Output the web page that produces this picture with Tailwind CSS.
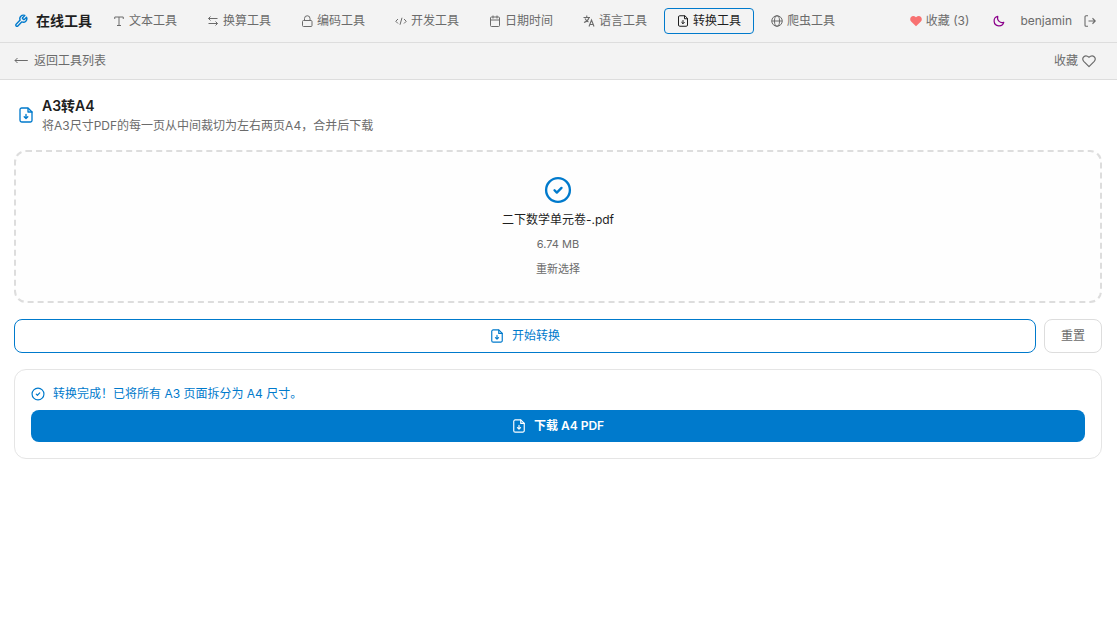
<!DOCTYPE html>
<html lang="zh-CN">
<head>
    <meta charset="UTF-8">
    <meta name="viewport" content="width=device-width, initial-scale=1.0">
    <title>A3转A4 - 在线工具</title>
    <script src="https://cdn.jsdelivr.net/npm/@tailwindcss/browser@4"></script>
</head>
<body class="min-h-screen bg-white font-['Inter','Noto_Sans_CJK_SC',sans-serif] text-xs text-[#6b6b6b]">
    <!-- Shared icons -->
    <svg class="hidden">
        <symbol id="file-down" viewBox="0 0 24 24" fill="none" stroke="currentColor" stroke-width="2" stroke-linecap="round" stroke-linejoin="round">
            <path d="M15 1.500H5.500A2.500 2.500 0 0 0 3 4v16a2.500 2.500 0 0 0 2.500 2.500h13A2.500 2.500 0 0 0 21 20V7.500z"/>
            <path d="M15 2v5.500h6M12 11v6M9.300 14.700l2.700 2.700 2.700-2.700"/>
        </symbol>
        <symbol id="check-circle" viewBox="0 0 24 24" fill="none" stroke="currentColor" stroke-width="2" stroke-linecap="round" stroke-linejoin="round">
            <circle cx="12" cy="12" r="10.2"/>
            <path d="m9 12.200 2 2 4-4"/>
        </symbol>
    </svg>

    <!-- Top navigation -->
    <header class="flex h-[43px] items-center border-b border-[#dddddd] bg-[#f3f3f3] px-3.5">
        <a class="mr-2 flex items-center gap-2 text-sm font-bold text-[#1e1e1e]">
            <svg class="size-3.5 text-[#007acc]" viewBox="0 0 24 24" fill="none" stroke="currentColor" stroke-width="2.400" stroke-linecap="round" stroke-linejoin="round"><path d="M14.7 6.3a1 1 0 0 0 0 1.4l1.6 1.6a1 1 0 0 0 1.4 0l3.77-3.77a6 6 0 0 1-7.94 7.94l-6.91 6.91a2.12 2.12 0 0 1-3-3l6.91-6.91a6 6 0 0 1 7.94-7.94z"/></svg>
            在线工具
        </a>
        <nav class="flex gap-1">
            <a class="flex h-[26px] items-center gap-1 rounded border border-transparent px-3">
                <svg class="size-3" viewBox="0 0 24 24" fill="none" stroke="currentColor" stroke-width="2"><path d="M3.500 8V4h17v4M12 4v17M8 21h8"/></svg>
                文本工具
            </a>
            <a class="flex h-[26px] items-center gap-1 rounded border border-transparent px-3">
                <svg class="size-3" viewBox="0 0 24 24" fill="none" stroke="currentColor" stroke-width="2"><path d="M21 7H3M7 3 3 7l4 4M3 17h18M17 13l4 4-4 4"/></svg>
                换算工具
            </a>
            <a class="flex h-[26px] items-center gap-1 rounded border border-transparent px-3">
                <svg class="size-3" viewBox="0 0 24 24" fill="none" stroke="currentColor" stroke-width="2"><rect x="3" y="11" width="19" height="12" rx="2"/><path d="M7 11V7a5.500 5.500 0 0 1 11 0v4"/></svg>
                编码工具
            </a>
            <a class="flex h-[26px] items-center gap-1 rounded border border-transparent px-3">
                <svg class="size-3" viewBox="0 0 24 24" fill="none" stroke="currentColor" stroke-width="2" stroke-linejoin="round"><path d="m6 8-4.500 4.500L6 17M18 8l4.500 4.500L18 17M14 5.500l-4 14"/></svg>
                开发工具
            </a>
            <a class="flex h-[26px] items-center gap-1 rounded border border-transparent px-3">
                <svg class="size-3" viewBox="0 0 24 24" fill="none" stroke="currentColor" stroke-width="2"><rect x="3" y="4" width="18" height="19" rx="2"/><path d="M3 10h18M8 1v6M16 1v6"/></svg>
                日期时间
            </a>
            <a class="flex h-[26px] items-center gap-1 rounded border border-transparent px-3">
                <svg class="size-3" viewBox="0 0 24 24" fill="none" stroke="currentColor" stroke-width="2.200"><path d="M1 5h13M7.500 1v4M12 5c-1 4-5 8-10 10M4 7c1.500 3 4 6 7 7M12 23l5-13 5 13M14 19h6"/></svg>
                语言工具
            </a>
            <a class="flex h-[26px] items-center gap-1 rounded border border-[#007acc] px-3 text-[#1e1e1e]">
                <svg class="size-3"><use href="#file-down"/></svg>
                转换工具
            </a>
            <a class="flex h-[26px] items-center gap-1 rounded border border-transparent px-3">
                <svg class="size-3" viewBox="0 0 24 24" fill="none" stroke="currentColor" stroke-width="2"><circle cx="12" cy="12" r="10.500"/><ellipse cx="12" cy="12" rx="5" ry="10.500"/><path d="M1.500 12h21"/></svg>
                爬虫工具
            </a>
        </nav>
        <div class="mr-[7px] ml-auto flex items-center">
            <a class="mr-6 flex items-center gap-1">
                <svg class="size-3 text-[#f87171]" viewBox="0 0 24 24" fill="currentColor"><path d="M12 22.500 2.200 13C-3 7 4-2 12 4.500 20-2 27 7 21.800 13z"/></svg>
                收藏 (3)
            </a>
            <svg class="mr-[15px] size-3 text-[#8b008b]" viewBox="0 0 24 24" fill="none" stroke="currentColor" stroke-width="2.400" stroke-linejoin="round"><path d="M9.500 2.500A9.800 9.800 0 1 0 21.500 14.500C15 17.500 7 11 9.500 2.500z"/></svg>
            <span class="mr-3">benjamin</span>
            <svg class="size-3" viewBox="0 0 24 24" fill="none" stroke="currentColor" stroke-width="2.200"><path d="M8 1.500H4a2 2 0 0 0-2 2v17a2 2 0 0 0 2 2h4M9 12h13M17 6.500l5.500 5.500-5.500 5.500"/></svg>
        </div>
    </header>

    <!-- Back / favourite bar -->
    <div class="flex h-[37px] items-center justify-between border-b border-[#dddddd] bg-[#f3f3f3] pr-[21px] pl-3.5">
        <a class="flex items-center gap-1.5">
            <svg class="size-3.5" viewBox="0 0 14 14" fill="none" stroke="currentColor"><path d="M13.800 6.500H1M3.500 4 1 6.500 3.500 9"/></svg>
            返回工具列表
        </a>
        <a class="flex items-center gap-1">
            收藏
            <svg class="size-3.5" viewBox="0 0 24 24" fill="none" stroke="currentColor" stroke-width="2" stroke-linejoin="round"><path d="M12 21.500 3 12.500C-1.500 7 5-.5 12 5.500 19-.5 25.500 7 21 12.500z"/></svg>
        </a>
    </div>

    <main class="pt-4 pr-[15px] pl-3.5">
        <div class="flex items-center gap-2 pl-1">
            <svg class="size-4 text-[#007acc]"><use href="#file-down"/></svg>
            <div class="h-[38px]">
                <h1 class="text-sm leading-5 font-semibold text-[#1e1e1e]">A3转A4</h1>
                <p class="leading-5">将A3尺寸PDF的每一页从中间裁切为左右两页A4，合并后下载</p>
            </div>
        </div>

        <!-- Selected file -->
        <div class="mt-4 flex h-[153px] flex-col items-center rounded-xl border-2 border-dashed border-[#dddddd] bg-[#fefefe] pt-6">
            <svg class="size-7 text-[#007acc]"><use href="#check-circle"/></svg>
            <p class="mt-1.5 leading-5 text-[#1e1e1e]">二下数学单元卷-.pdf</p>
            <p class="mt-1.5 text-[11px] leading-4">6.74 MB</p>
            <button class="mt-[9px] text-[11px] leading-4">重新选择</button>
        </div>

        <div class="mt-4 flex gap-2">
            <button class="flex h-[34px] flex-1 items-center justify-center gap-2 rounded-lg border border-[#007acc] text-[#007acc]">
                <svg class="size-3.5"><use href="#file-down"/></svg>
                开始转换
            </button>
            <button class="h-[34px] w-[58px] rounded-lg border border-[#dddddd]">重置</button>
        </div>

        <!-- Result -->
        <div class="mt-4 h-[90px] rounded-xl border border-[#e5e5e5] px-4 pt-4">
            <p class="flex h-4 items-center gap-2 text-[#007acc]">
                <svg class="size-3.5"><use href="#check-circle"/></svg>
                转换完成！已将所有 A3 页面拆分为 A4 尺寸。
            </p>
            <button class="mt-2 flex h-8 w-full items-center justify-center gap-2 rounded-lg bg-[#007acc] font-semibold text-white">
                <svg class="size-3.5"><use href="#file-down"/></svg>
                下载 A4 PDF
            </button>
        </div>
    </main>
</body>
</html>
